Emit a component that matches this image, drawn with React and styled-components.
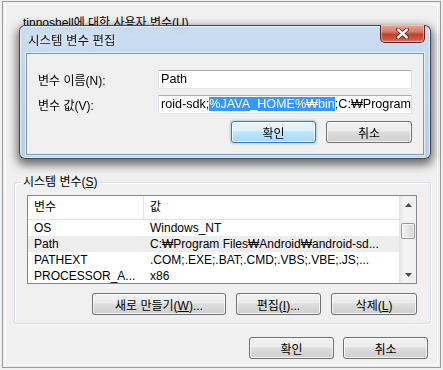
import styled, { createGlobalStyle } from "styled-components";

const GlobalStyle = createGlobalStyle`
  html, body { margin: 0; padding: 0; background: #f0f0f0; }
  body {
    font-family: "Liberation Sans", "Noto Sans CJK KR", sans-serif;
    font-size: 12px;
    color: #000;
  }
  * { box-sizing: border-box; }
`;

const Frame = styled.div`
  position: relative;
  width: 439px;
  height: 367px;
  margin: 1px 0 0 2px;
  border: 1px solid #9b9b9b;
  box-shadow: inset 0 0 0 2px #f0f0f0, inset 0 0 0 3px #ffffff;
  background: #f0f0f0;
  display: flex;
  flex-direction: column;
`;

const UserArea = styled.div`
  height: 172px;
  padding: 14px 0 0 20px;
  line-height: 14px;
`;

const Mn = styled.span`
  text-decoration: underline;
`;

const Group = styled.fieldset`
  margin: 0 0 0 11px;
  width: 417px;
  padding: 5px 13px 8px 12px;
  border: 1px solid #d5dfe5;
  border-radius: 3px;
  box-shadow: inset 1px 1px 0 #fff, 1px 1px 0 #fff;
  min-width: 0;
`;

const Legend = styled.legend`
  padding: 0 2px;
  margin-left: -6px;
  line-height: 16px;
`;

const ListView = styled.div`
  height: 89px;
  border: 1px solid #828790;
  background: #fff;
  display: flex;
  overflow: hidden;
`;

const ListBody = styled.div`
  flex: 1;
  min-width: 0;
`;

const ListRow = styled.div`
  display: grid;
  grid-template-columns: 116px 1fr;
  height: ${(p) => (p.$head ? "24px" : "16px")};
  line-height: ${(p) => (p.$head ? "23px" : "16px")};
  background: ${(p) => (p.$hot ? "#ededed" : "#fff")};
  border-bottom: ${(p) => (p.$head ? "1px solid #e3e3e3" : "none")};
  white-space: nowrap;
`;

const Cell = styled.div`
  padding-left: 6px;
  overflow: hidden;
  border-right: ${(p) => (p.$sep ? "1px solid #e5e5e5" : "none")};
`;

const ScrollBar = styled.div`
  width: 17px;
  display: flex;
  flex-direction: column;
  background: linear-gradient(90deg, #e8e8e8, #f4f4f4 30%, #f0f0f0);
  border-left: 1px solid #e3e3e3;
`;

const Arrow = styled.div`
  height: 17px;
  display: flex;
  align-items: center;
  justify-content: center;
`;

const Track = styled.div`
  flex: 1;
  padding: 10px 1px 0 1px;
`;

const Thumb = styled.div`
  height: 16px;
  border: 1px solid #989898;
  border-radius: 2px;
  background: linear-gradient(90deg, #f4f4f4, #e6e6e6 50%, #d3d3d3);
  box-shadow: inset 0 0 0 1px rgba(255, 255, 255, 0.7);
`;

const ButtonRow = styled.div`
  display: flex;
  justify-content: flex-end;
  gap: ${(p) => p.$gap}px;
  margin-top: ${(p) => p.$mt}px;
  padding-right: ${(p) => p.$pr || 0}px;
`;

const Button = styled.button`
  width: ${(p) => p.$w}px;
  height: 22px;
  padding: 0;
  font: inherit;
  color: #000;
  border: 1px solid ${(p) => (p.$default ? "#3c7fb1" : "#707070")};
  border-radius: 3px;
  background: ${(p) =>
    p.$default
      ? "linear-gradient(#eaf6fd, #d9f0fc 45%, #bee6fd 50%, #a7d9f5)"
      : "linear-gradient(#f2f2f2, #ebebeb 45%, #dddddd 50%, #cfcfcf)"};
  box-shadow: inset 0 0 0 1px rgba(255, 255, 255, 0.75)
    ${(p) => (p.$default ? ", 0 0 2px 1px rgba(80,160,230,0.45)" : "")};
`;

/* the edit dialog floats over the parent window */
const Dialog = styled.div`
  position: absolute;
  left: 16px;
  top: 23px;
  width: 412px;
  height: 134px;
  border: 1px solid rgba(25, 35, 50, 0.8);
  border-radius: 6px;
  background: linear-gradient(
    180deg,
    rgba(198, 218, 240, 0.88),
    rgba(188, 211, 236, 0.9) 40%,
    rgba(178, 204, 232, 0.92)
  );
  backdrop-filter: blur(2.5px);
  box-shadow: inset 0 0 0 1px rgba(255, 255, 255, 0.55),
    0 4px 10px 2px rgba(0, 0, 0, 0.55);
  display: flex;
  flex-direction: column;
`;

const TitleBar = styled.div`
  height: 27px;
  display: flex;
  align-items: center;
  padding-left: 8px;
`;

const Title = styled.span`
  flex: 1;
  font-size: 12.5px;
  color: #111;
  text-shadow: 0 0 6px rgba(255, 255, 255, 0.9);
`;

const CloseButton = styled.div`
  align-self: flex-start;
  margin: -1px 5px 0 0;
  width: 45px;
  height: 18px;
  border: 1px solid #5f241d;
  border-top: none;
  border-radius: 0 0 5px 5px;
  background: linear-gradient(#eaa698, #d67a68 40%, #c2402d 55%, #cd5a44 85%, #e08c74);
  box-shadow: inset 0 0 0 1px rgba(255, 220, 210, 0.45);
  display: flex;
  align-items: center;
  justify-content: center;
`;

const Panel = styled.div`
  margin: 0 6px;
  height: 102px;
  border: 1px solid #8296b0;
  background: #f0f0f0;
  box-shadow: 0 0 0 1px rgba(255, 255, 255, 0.6);
  padding: 16px 11px 0 11px;
`;

const FieldGrid = styled.div`
  display: grid;
  grid-template-columns: 120px 1fr;
  grid-auto-rows: 19px;
  row-gap: 6px;
  align-items: center;
`;

const TextBox = styled.div`
  height: 19px;
  border: 1px solid;
  border-color: #abadb3 #dbdfe6 #e3e9ef #e2e3ea;
  background: #fff;
  padding: 0 2px;
  font-size: 12.6px;
  line-height: 17px;
  white-space: nowrap;
  overflow: hidden;
`;

const Selected = styled.span`
  background: #3399ff;
  color: #fff;
`;

const vars = [
  { name: "OS", value: "Windows_NT" },
  { name: "Path", value: "C:₩Program Files₩Android₩android-sd...", hot: true },
  { name: "PATHEXT", value: ".COM;.EXE;.BAT;.CMD;.VBS;.VBE;.JS;..." },
  { name: "PROCESSOR_A...", value: "x86" },
];

export default function App() {
  return (
    <>
      <GlobalStyle />
      <Frame>
        <UserArea>
          tinnoshell에 대한 사용자 변수(<Mn>U</Mn>)
        </UserArea>

        <Group>
          <Legend>
            시스템 변수(<Mn>S</Mn>)
          </Legend>
          <ListView>
            <ListBody>
              <ListRow $head>
                <Cell $sep>변수</Cell>
                <Cell>값</Cell>
              </ListRow>
              {vars.map((v) => (
                <ListRow key={v.name} $hot={v.hot}>
                  <Cell>{v.name}</Cell>
                  <Cell>{v.value}</Cell>
                </ListRow>
              ))}
            </ListBody>
            <ScrollBar>
              <Arrow>
                <svg width="7" height="4" viewBox="0 0 7 4">
                  <path d="M0 4 L3.5 0 L7 4 Z" fill="#4a4a4a" />
                </svg>
              </Arrow>
              <Track>
                <Thumb />
              </Track>
              <Arrow>
                <svg width="7" height="4" viewBox="0 0 7 4">
                  <path d="M0 0 L3.5 4 L7 0 Z" fill="#4a4a4a" />
                </svg>
              </Arrow>
            </ScrollBar>
          </ListView>
          <ButtonRow $gap={10} $mt={9}>
            <Button $w={134}>
              새로 만들기(<Mn>W</Mn>)...
            </Button>
            <Button $w={85}>
              편집(<Mn>I</Mn>)...
            </Button>
            <Button $w={86}>
              삭제(<Mn>L</Mn>)
            </Button>
          </ButtonRow>
        </Group>

        <ButtonRow $gap={9} $mt={13} $pr={12}>
          <Button $w={85}>확인</Button>
          <Button $w={85}>취소</Button>
        </ButtonRow>

        <Dialog>
          <TitleBar>
            <Title>시스템 변수 편집</Title>
            <CloseButton>
              <svg width="13" height="11" viewBox="0 0 13 11">
                <path
                  d="M2 1.5 L11 9.5 M11 1.5 L2 9.5"
                  stroke="#5a1a12"
                  strokeWidth="4"
                  strokeLinecap="round"
                />
                <path
                  d="M2 1.5 L11 9.5 M11 1.5 L2 9.5"
                  stroke="#fff"
                  strokeWidth="2.4"
                  strokeLinecap="round"
                />
              </svg>
            </CloseButton>
          </TitleBar>
          <Panel>
            <FieldGrid>
              <span>변수 이름(N):</span>
              <TextBox>Path</TextBox>
              <span>변수 값(V):</span>
              <TextBox>
                roid-sdk;<Selected>%JAVA_HOME%₩bin</Selected>;C:₩Program
              </TextBox>
            </FieldGrid>
            <ButtonRow $gap={10} $mt={7}>
              <Button $w={85} $default>
                확인
              </Button>
              <Button $w={86}>취소</Button>
            </ButtonRow>
          </Panel>
        </Dialog>
      </Frame>
    </>
  );
}
